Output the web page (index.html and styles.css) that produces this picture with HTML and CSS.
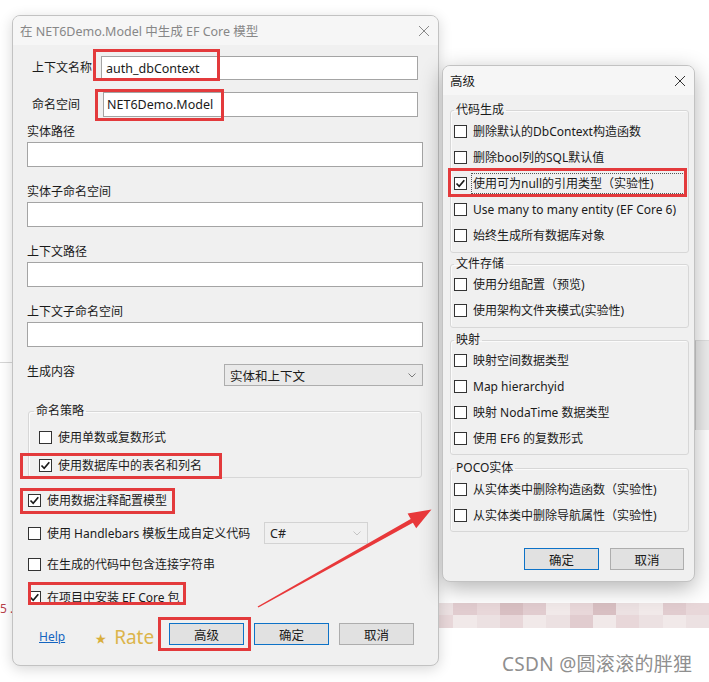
FILE: index.html
```html
<!DOCTYPE html>
<html lang="zh-CN">
<head>
<meta charset="utf-8">
<title>EF Core 模型</title>
<link rel="stylesheet" href="styles.css">
</head>
<body>
<div class="desktop">
  <div class="under-line under-line-left"></div>
  <div class="under-panel-right"></div>
  <span class="stray">5 .</span>
  <div class="mosaic">
    <span class="mz a"></span><span class="mz b"></span><span class="mz c"></span><span class="mz d"></span><span class="mz b"></span><span class="mz e"></span><span class="mz c"></span><span class="mz d"></span><span class="mz a"></span><span class="mz e"></span><span class="mz b"></span><span class="mz c"></span>
    <span class="mz c"></span><span class="mz e"></span><span class="mz a"></span><span class="mz c"></span><span class="mz e"></span><span class="mz a"></span><span class="mz b"></span><span class="mz e"></span><span class="mz c"></span><span class="mz a"></span><span class="mz e"></span><span class="mz a"></span>
  </div>
  <div class="watermark">CSDN @圆滚滚的胖狸</div>

  <section class="dlg dlg-main">
    <header class="titlebar">
      <span class="title">在 NET6Demo.Model 中生成 EF Core 模型</span>
      <svg class="close" viewBox="0 0 12 12"><path d="M1 1 L11 11 M11 1 L1 11" stroke="#8a8a8a" stroke-width="1"/></svg>
    </header>
    <div class="body">
      <div class="inline-row r1"><label class="lbl-a">上下文名称</label><div class="input">auth_dbContext</div></div>
      <div class="inline-row r2"><label class="lbl-b">命名空间</label><div class="input">NET6Demo.Model</div></div>
      <div class="field first"><label>实体路径</label><div class="input"></div></div>
      <div class="field"><label>实体子命名空间</label><div class="input"></div></div>
      <div class="field"><label>上下文路径</label><div class="input"></div></div>
      <div class="field"><label>上下文子命名空间</label><div class="input"></div></div>
      <div class="gen-row">
        <label>生成内容</label>
        <div class="select">实体和上下文<svg class="chev" viewBox="0 0 8 5"><path d="M0.5 0.5 L4 4 L7.5 0.5" fill="none" stroke="#7a7a7a" stroke-width="1"/></svg></div>
      </div>
      <fieldset class="group g-naming">
        <legend>命名策略</legend>
        <div class="check"><span class="box"></span><span>使用单数或复数形式</span></div>
        <div class="check"><span class="box on"><svg viewBox="0 0 13 13"><path d="M2.5 6.5 L5.2 9.3 L10.3 3.2" fill="none" stroke="#1a1a1a" stroke-width="1.7"/></svg></span><span>使用数据库中的表名和列名</span></div>
      </fieldset>
      <div class="check outer c1"><span class="box on"><svg viewBox="0 0 13 13"><path d="M2.5 6.5 L5.2 9.3 L10.3 3.2" fill="none" stroke="#1a1a1a" stroke-width="1.7"/></svg></span><span>使用数据注释配置模型</span></div>
      <div class="check outer c2"><span class="box"></span><span class="hb-text">使用 Handlebars 模板生成自定义代码</span>
        <div class="select disabled">C#<svg class="chev" viewBox="0 0 8 5"><path d="M0.5 0.5 L4 4 L7.5 0.5" fill="none" stroke="#c4c4c4" stroke-width="1"/></svg></div>
      </div>
      <div class="check outer c3"><span class="box"></span><span>在生成的代码中包含连接字符串</span></div>
      <div class="check outer c4"><span class="box on"><svg viewBox="0 0 13 13"><path d="M2.5 6.5 L5.2 9.3 L10.3 3.2" fill="none" stroke="#1a1a1a" stroke-width="1.7"/></svg></span><span>在项目中安装 EF Core 包</span></div>
      <div class="footer">
        <a class="help">Help</a>
        <span class="star">★</span>
        <span class="rate">Rate</span>
        <div class="btns">
          <button class="btn def">高级</button>
          <button class="btn def">确定</button>
          <button class="btn">取消</button>
        </div>
      </div>
    </div>
  </section>

  <section class="dlg dlg-adv">
    <header class="titlebar">
      <span class="title">高级</span>
      <svg class="close" viewBox="0 0 12 12"><path d="M1 1 L11 11 M11 1 L1 11" stroke="#333" stroke-width="1"/></svg>
    </header>
    <div class="body">
      <fieldset class="group g1">
        <legend>代码生成</legend>
        <div class="check"><span class="box"></span><span>删除默认的DbContext构造函数</span></div>
        <div class="check"><span class="box"></span><span>删除bool列的SQL默认值</span></div>
        <div class="check"><span class="box on"><svg viewBox="0 0 13 13"><path d="M2.5 6.5 L5.2 9.3 L10.3 3.2" fill="none" stroke="#1a1a1a" stroke-width="1.7"/></svg></span><span class="focus">使用可为null的引用类型（实验性)</span></div>
        <div class="check"><span class="box"></span><span>Use many to many entity (EF Core 6)</span></div>
        <div class="check"><span class="box"></span><span>始终生成所有数据库对象</span></div>
      </fieldset>
      <fieldset class="group g2">
        <legend>文件存储</legend>
        <div class="check"><span class="box"></span><span>使用分组配置（预览)</span></div>
        <div class="check"><span class="box"></span><span>使用架构文件夹模式(实验性)</span></div>
      </fieldset>
      <fieldset class="group g3">
        <legend>映射</legend>
        <div class="check"><span class="box"></span><span>映射空间数据类型</span></div>
        <div class="check"><span class="box"></span><span>Map hierarchyid</span></div>
        <div class="check"><span class="box"></span><span>映射 NodaTime 数据类型</span></div>
        <div class="check"><span class="box"></span><span>使用 EF6 的复数形式</span></div>
      </fieldset>
      <fieldset class="group g4">
        <legend>POCO实体</legend>
        <div class="check"><span class="box"></span><span>从实体类中删除构造函数（实验性)</span></div>
        <div class="check"><span class="box"></span><span>从实体类中删除导航属性（实验性)</span></div>
      </fieldset>
      <div class="adv-btns">
        <button class="btn def">确定</button>
        <button class="btn">取消</button>
      </div>
    </div>
  </section>

  <div class="mark m1"></div>
  <div class="mark m2"></div>
  <div class="mark m3"></div>
  <div class="mark m4"></div>
  <div class="mark m5"></div>
  <div class="mark m6"></div>
  <div class="mark m7"></div>
  <svg class="arrow" viewBox="0 0 709 682"><polygon points="257.6,606.4 410.7,518.9 407.6,513.4 431.5,509.6 416.2,528.2 412.9,522.7 258.4,607.6" fill="#e8383a"/></svg>
</div>
</body>
</html>
```

FILE: styles.css
```css
* { box-sizing: border-box; }
html, body { margin: 0; padding: 0; }
body {
  width: 709px;
  height: 682px;
  overflow: hidden;
  background: #ffffff;
  font-family: "Noto Sans", "Noto Sans CJK SC", sans-serif;
  font-size: 12px;
  color: #1a1a1a;
}
.desktop { position: relative; width: 709px; height: 682px; background: #fff; }

/* underlying desktop bits */
.under-line {
  position: absolute;
  height: 1px;
  background: #d6d6d6;
}
.under-line-left { left: 0; top: 362px; width: 14px; }
.under-panel-right {
  position: absolute;
  left: 695px; top: 340px;
  width: 14px; height: 90px;
  background: #eeeeee;
  border-left: 1px solid #cfcfcf;
  border-top: 1px solid #e0e0e0;
}
.stray {
  position: absolute;
  left: 0; top: 601px;
  font-size: 12px;
  line-height: 16px;
  color: #b8404a;
}
.mosaic {
  position: absolute;
  left: 430px; top: 603px;
  width: 279px; height: 25px;
  display: grid;
  grid-template-columns: repeat(12, 1fr);
  grid-template-rows: 12px 13px;
  opacity: .85;
}
.mz.a { background: #e9dcdd; }
.mz.b { background: #dcc4c7; }
.mz.c { background: #e4d1d3; }
.mz.d { background: #d2b4b8; }
.mz.e { background: #efe6e6; }
.watermark {
  position: absolute;
  left: 502px; top: 652px;
  font-size: 19px;
  line-height: 24px;
  color: #8f8f8f;
  letter-spacing: 0.3px;
}

/* dialogs */
.dlg {
  position: absolute;
  display: flex;
  flex-direction: column;
  border: 1px solid #c2c2c2;
  border-radius: 8px;
  background: #f0f0f0;
  overflow: hidden;
}
.dlg-main {
  left: 12px; top: 15px;
  width: 427px; height: 651px;
  box-shadow: 0 3px 14px rgba(0,0,0,.16);
}
.dlg-adv {
  left: 442px; top: 65px;
  width: 253px; height: 517px;
  box-shadow: 0 6px 22px rgba(0,0,0,.30);
}
.titlebar {
  flex: none;
  height: 29px;
  display: flex;
  align-items: center;
  justify-content: space-between;
  padding: 0 8px 0 7px;
  background: #f6f6f6;
}
.dlg-main .title { color: #878787; font-size: 12.5px; }
.dlg-adv .title { color: #1a1a1a; font-size: 12.5px; }
.close { width: 12px; height: 12px; display: block; }

.body { flex: 1; display: flex; flex-direction: column; }
.dlg-main .body { padding: 0 15px 0 14px; }
.dlg-adv .body { padding: 0 5px 0 7px; }

label { line-height: 16px; }
.input {
  background: #fff;
  border: 1px solid #a4a4a4;
  height: 25px;
  display: flex;
  align-items: center;
  padding-left: 4px;
  font-size: 12.5px;
}

.inline-row { display: flex; align-items: center; }
.inline-row .input { flex: 1; margin-right: 5px; }
.r1 { margin-top: 11px; height: 24px; }
.r1 .input { height: 24px; }
.r2 { margin-top: 12px; height: 25px; }
.r2 .input { padding-left: 3px; }
.lbl-a { width: 74px; padding-left: 5px; flex: none; }
.lbl-b { width: 76px; padding-left: 5px; flex: none; }

.field { display: flex; flex-direction: column; margin-top: 17px; }
.field.first { margin-top: 7px; }
.field .input { margin-top: 2px; }

.gen-row { display: flex; justify-content: space-between; align-items: flex-start; margin-top: 17px; }
.select {
  height: 22px;
  display: flex;
  align-items: center;
  justify-content: space-between;
  padding: 0 6px 0 5px;
  border: 1px solid #adadad;
  background: #e9e9e9;
  font-size: 12.5px;
}
.gen-row .select { width: 199px; }
.select.disabled {
  width: 104px;
  background: #f0f0f0;
  border-color: #d3d3d3;
  color: #222;
}
.chev { width: 8px; height: 5px; display: block; }

/* group boxes */
.group {
  margin: 0;
  padding: 0;
  border: 1px solid #d7d7d7;
  border-radius: 3px;
  box-shadow: inset 1px 1px 0 #fbfbfb;
  min-width: 0;
}
.group legend {
  padding: 0 2px;
  line-height: 16px;
  font-size: 12px;
}

.check { display: flex; align-items: center; height: 20px; gap: 6px; }
.box {
  flex: none;
  width: 13px; height: 13px;
  border: 1px solid #333;
  background: #fff;
  position: relative;
}
.box svg { position: absolute; left: -1px; top: -1px; width: 13px; height: 13px; }

/* main dialog group */
.g-naming { margin: 17px 1px 0 1px; padding-bottom: 2px; }
.g-naming legend { margin-left: 5px; }
.g-naming .check { margin-left: 10px; margin-top: 8px; }

.outer { margin-left: 1px; }
.c1 { margin-top: 12px; }
.c2 { margin-top: 12px; height: 22px; }
.c3 { margin-top: 10px; }
.c4 { margin-top: 13px; }
.hb-text { width: 217px; flex: none; margin-right: -6px; }

.footer { display: flex; align-items: center; height: 22px; margin-top: 16px; }
.help {
  margin-left: 12px;
  margin-top: 5px;
  color: #1565c0;
  text-decoration: underline;
  font-size: 12px;
}
.star { margin-left: 30px; margin-top: 8px; font-size: 11px; color: #d9ae3b; }
.rate { margin-left: 8px; margin-top: 6px; font-size: 19px; line-height: 22px; color: #dcb54b; }
.btns { margin-left: auto; margin-right: 9px; display: flex; gap: 10px; }
.btn {
  width: 75px;
  height: 22px;
  padding: 0;
  font-family: inherit;
  font-size: 12.5px;
  color: #1a1a1a;
  background: #e1e1e1;
  border: 1px solid #adadad;
  border-radius: 0;
}
.btn.def { border-color: #0d72c7; }

/* advanced dialog */
.dlg-adv .group legend { margin-left: 3px; }
.dlg-adv .check { margin-left: 3px; }
.g1 { margin-top: 7px; padding-bottom: 7px; }
.g1 .check { margin-top: 6px; }
.g1 .check:first-of-type { margin-top: 3px; }
.g2 { margin-top: 3px; padding-bottom: 7px; }
.g2 .check { margin-top: 6px; }
.g2 .check:first-of-type { margin-top: 2px; }
.g3 { margin-top: 4px; padding-bottom: 6px; }
.g3 .check { margin-top: 6px; }
.g3 .check:first-of-type { margin-top: 2px; }
.g4 { margin-top: 5px; padding-bottom: 6px; }
.g4 .check { margin-top: 6px; }
.g4 .check:first-of-type { margin-top: 3px; }
.focus {
  flex: 1;
  height: 21px;
  margin-left: -2px;
  margin-right: 3px;
  padding: 0 1px;
  line-height: 19px;
  border: 1px dotted #555;
}
.adv-btns { display: flex; justify-content: flex-end; gap: 11px; margin-top: 16px; margin-right: 5px; }
.adv-btns .btn:last-child { width: 74px; }

/* annotations */
.mark { position: absolute; border: 3px solid #e33a3c; }
.m1 { left: 93px; top: 49px; width: 127px; height: 32px; }
.m2 { left: 95px; top: 89px; width: 129px; height: 32px; }
.m3 { left: 20px; top: 453px; width: 202px; height: 26px; }
.m4 { left: 20px; top: 488px; width: 155px; height: 26px; }
.m5 { left: 28px; top: 582px; width: 158px; height: 23px; }
.m6 { left: 158px; top: 617px; width: 93px; height: 34px; }
.m7 { left: 448px; top: 168px; width: 239px; height: 29px; }
.arrow { position: absolute; left: 0; top: 0; width: 709px; height: 682px; pointer-events: none; }
```
